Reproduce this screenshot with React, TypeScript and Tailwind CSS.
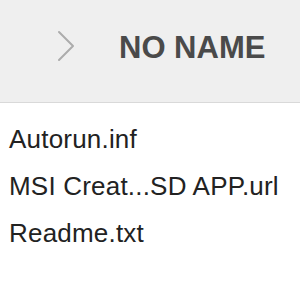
export default function App() {
  return (
    <div className="w-[300px] h-[300px] bg-white overflow-hidden" style={{ fontFamily: '"Liberation Sans", Arial, sans-serif' }}>
      <div className="h-[103px] bg-[#efefef] border-b border-[#d9d9d9] flex items-center">
        <svg className="ml-[56px] mt-[-10px]" width="20" height="32" viewBox="0 0 20 32" fill="none">
          <path d="M3 2 L17 16 L3 30" stroke="#acacac" strokeWidth="2" strokeLinecap="round" strokeLinejoin="round" />
        </svg>
        <div className="ml-[43px] mt-[-8px] text-[31px] font-bold text-[#4a4a4a] leading-none">NO NAME</div>
      </div>
      <div className="pt-[13px] pl-[9px] text-[26px] text-[#222] leading-[47px] tracking-[0.2px]">
        <div>Autorun.inf</div>
        <div>MSI Creat...SD APP.url</div>
        <div>Readme.txt</div>
      </div>
    </div>
  );
}
